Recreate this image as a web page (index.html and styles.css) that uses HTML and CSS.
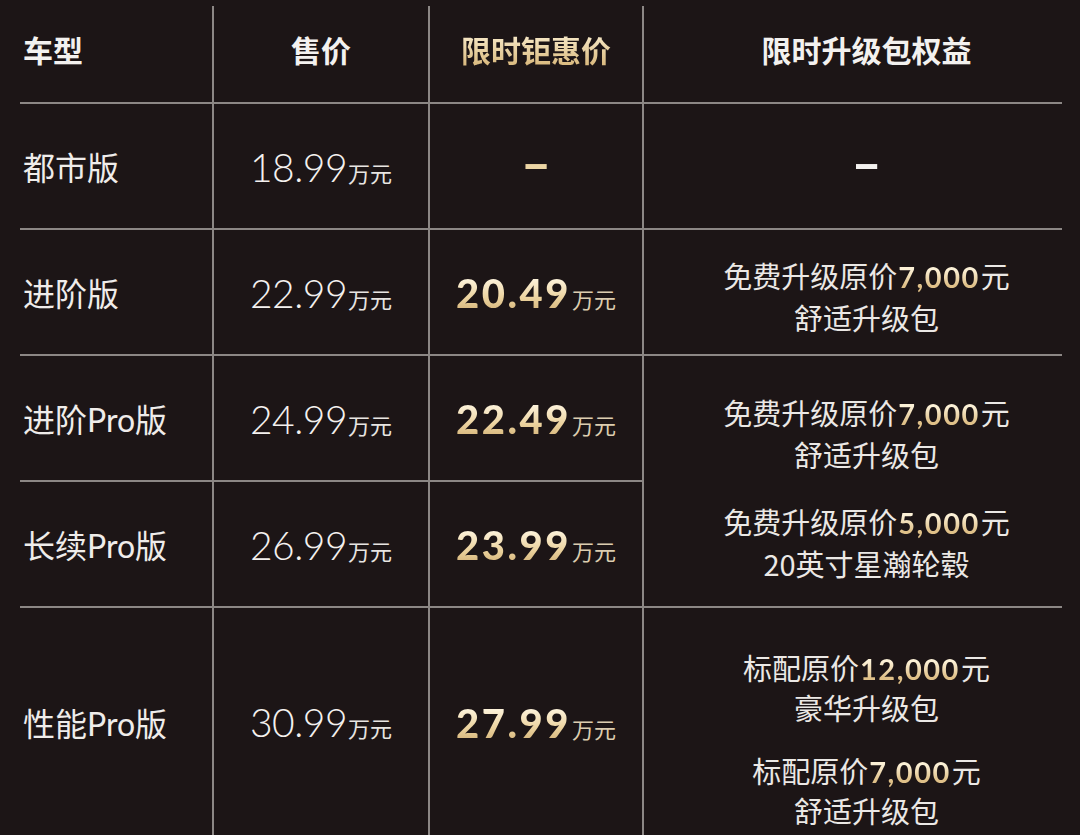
FILE: index.html
```html
<!DOCTYPE html>
<html lang="zh-CN">
<head>
<meta charset="utf-8">
<title>车型价格表</title>
<link rel="stylesheet" href="styles.css">
</head>
<body>
<div class="table">
  <div class="cell head first">车型</div>
  <div class="cell head">售价</div>
  <div class="cell head gold-head">限时钜惠价</div>
  <div class="cell head last">限时升级包权益</div>

  <div class="cell label">都市版</div>
  <div class="cell price"><span class="pv"><span class="num">18.99</span><span class="unit">万元</span></span></div>
  <div class="cell"><span class="dash gold-dash">–</span></div>
  <div class="cell last"><span class="dash">–</span></div>

  <div class="cell label">进阶版</div>
  <div class="cell price"><span class="pv"><span class="num">22.99</span><span class="unit">万元</span></span></div>
  <div class="cell price"><span class="pv"><span class="num bold">20.49</span><span class="unit gold-unit">万元</span></span></div>
  <div class="cell last benefits pad-a">
    <div class="benefit"><span>免费升级原价<b class="amt">7,000</b>元</span><span>舒适升级包</span></div>
  </div>

  <div class="cell label">进阶Pro版</div>
  <div class="cell price"><span class="pv"><span class="num">24.99</span><span class="unit">万元</span></span></div>
  <div class="cell price"><span class="pv"><span class="num bold">22.49</span><span class="unit gold-unit">万元</span></span></div>
  <div class="cell last benefits span2 pad-b">
    <div class="benefit"><span>免费升级原价<b class="amt">7,000</b>元</span><span>舒适升级包</span></div>
    <div class="benefit"><span>免费升级原价<b class="amt">5,000</b>元</span><span>20英寸星瀚轮毂</span></div>
  </div>

  <div class="cell label">长续Pro版</div>
  <div class="cell price"><span class="pv"><span class="num">26.99</span><span class="unit">万元</span></span></div>
  <div class="cell price"><span class="pv"><span class="num bold">23.99</span><span class="unit gold-unit">万元</span></span></div>

  <div class="cell label nob">性能Pro版</div>
  <div class="cell price nob"><span class="pv"><span class="num">30.99</span><span class="unit">万元</span></span></div>
  <div class="cell price nob"><span class="pv"><span class="num bold">27.99</span><span class="unit gold-unit">万元</span></span></div>
  <div class="cell last benefits nob pad-c">
    <div class="benefit"><span>标配原价<b class="amt">12,000</b>元</span><span>豪华升级包</span></div>
    <div class="benefit"><span>标配原价<b class="amt">7,000</b>元</span><span>舒适升级包</span></div>
  </div>
</div>
</body>
</html>
```

FILE: styles.css
```css
html, body {
  margin: 0;
  padding: 0;
  background: #1c1516;
  overflow: hidden;
}

body {
  width: 1080px;
  height: 835px;
  font-family: Lato, "Noto Sans CJK SC", sans-serif;
  color: #efecea;
}

.table {
  margin: 6px 0 0 20px;
  display: grid;
  grid-template-columns: 194px 216px 214px 418px;
  grid-template-rows: 98px 126px 126px 126px 126px 227px;
}

.cell {
  box-sizing: border-box;
  border-bottom: 2px solid #8c8785;
  border-right: 2px solid #8c8785;
  display: flex;
  align-items: center;
  justify-content: center;
}

.cell.last {
  border-right: none;
  padding-left: 27px;
}

.cell.nob {
  border-bottom: none;
}

.head {
  font-family: "Noto Sans CJK SC", sans-serif;
  font-size: 30px;
  font-weight: 700;
  color: #f3f1ef;
  padding-bottom: 10px;
}

.head.first {
  justify-content: flex-start;
  padding-left: 3px;
}

.gold-head {
  background: linear-gradient(180deg, #f7e9c8 30%, #dbbc82 60%);
  -webkit-background-clip: text;
  background-clip: text;
  color: transparent;
}

.label {
  justify-content: flex-start;
  padding-left: 3px;
  font-size: 32px;
  font-weight: 400;
  color: #efecea;
}

.pv {
  display: block;
  white-space: nowrap;
  line-height: 1;
  padding-top: 2px;
}

.num {
  font-family: Lato, sans-serif;
  font-size: 39px;
  font-weight: 300;
  letter-spacing: -0.5px;
  color: #f4f1ef;
}

.num.bold {
  font-weight: 900;
  font-size: 40px;
  letter-spacing: 2.5px;
  background: linear-gradient(180deg, #fdf3dc 20%, #ecd39f 60%, #d3b277 90%);
  -webkit-background-clip: text;
  background-clip: text;
  color: transparent;
}

.unit {
  font-family: "Noto Sans CJK SC", sans-serif;
  font-size: 22px;
  margin-left: 1px;
  color: #e8e5e2;
}

.unit.gold-unit {
  color: #dccdb0;
}

.dash {
  font-family: Lato, sans-serif;
  font-size: 52px;
  font-weight: 900;
  line-height: 1;
  color: #f3f1ef;
  padding-bottom: 8px;
}

.dash.gold-dash {
  color: #ecd5a4;
}

.benefits {
  flex-direction: column;
  justify-content: flex-start;
  gap: 26px;
  font-size: 29px;
  line-height: 41px;
  color: #ebe8e5;
}

.span2 {
  grid-row: span 2;
}

.pad-a {
  padding-top: 25px;
}

.pad-b {
  padding-top: 36px;
}

.pad-c {
  padding-top: 40px;
  line-height: 39px;
  gap: 24px;
}

.benefit {
  display: flex;
  flex-direction: column;
  align-items: center;
  font-family: "Noto Sans CJK SC", sans-serif;
}

.amt {
  font-family: Lato, sans-serif;
  font-weight: 700;
  letter-spacing: 1.5px;
  margin: 0 1px;
  background: linear-gradient(180deg, #fcf1d7 30%, #dfc088 75%);
  -webkit-background-clip: text;
  background-clip: text;
  color: transparent;
}
```
